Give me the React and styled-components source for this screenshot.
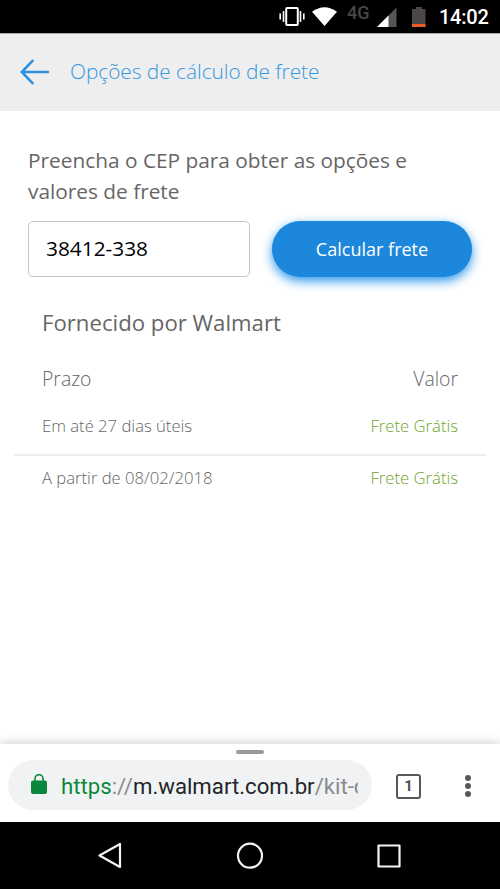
import React from "react";
import styled, { createGlobalStyle } from "styled-components";

const GlobalStyle = createGlobalStyle`
  *, *::before, *::after { box-sizing: border-box; }
  body { margin: 0; background: #fff; overflow: hidden; }
  button, input { font: inherit; }
`;

const Screen = styled.div`
  width: 500px;
  height: 889px;
  display: flex;
  flex-direction: column;
  background: #fff;
  color: #666;
  font-family: "Open Sans", sans-serif;
`;

const StatusBar = styled.div`
  height: 34px;
  flex: none;
  display: flex;
  justify-content: flex-end;
  background: #000;
  border-bottom: 1px solid #aaa;
  color: #fff;
  font-family: Roboto, sans-serif;
`;

const StatusIcon = styled.svg`
  display: block;
  flex: none;
  width: ${(p) => p.$width}px;
  height: 33px;
  margin-right: ${(p) => p.$gap}px;
`;

const Network = styled.span`
  width: 24px;
  margin-right: 6px;
  color: #474747;
  font-size: 18px;
  line-height: 25px;
  font-weight: 500;
`;

const Clock = styled.time`
  width: 61px;
  font-size: 20px;
  line-height: 35px;
  font-weight: 500;
  letter-spacing: -0.25px;
`;

const Header = styled.header`
  height: 77px;
  flex: none;
  display: flex;
  align-items: center;
  padding: 0 0 2px 20px;
  background: #eee;
`;

const BackButton = styled.button`
  display: flex;
  width: 30px;
  height: 28px;
  margin: 0 20px 0 0;
  padding: 0;
  border: 0;
  background: none;
`;

const Title = styled.h1`
  margin: 0;
  padding-bottom: 1px;
  color: #3497e3;
  font-size: 20.8px;
  line-height: 30px;
  font-weight: 300;
  white-space: nowrap;
`;

const Content = styled.main`
  flex: 1;
  padding: 34px 28px 0;
`;

const Prompt = styled.p`
  margin: 0 0 15px;
  font-size: 20.83px;
  line-height: 30.5px;
  white-space: nowrap;
`;

const Form = styled.form`
  display: flex;
  gap: 22px;
`;

const PostalInput = styled.input`
  width: 222px;
  height: 56px;
  padding: 0 17px 2px;
  border: 1px solid #c4c4c4;
  border-radius: 5px;
  outline: 0;
  background: #fff;
  color: #000;
  font-size: 20.83px;
`;

const SubmitButton = styled.button`
  width: 200px;
  height: 56px;
  padding: 0;
  border: 0;
  border-radius: 28px;
  background: #1d87dc;
  box-shadow: 0 4px 11px #2d98ed;
  color: #fff;
  font-size: 18.05px;
`;

const Provider = styled.h2`
  margin: 31px 14px 0;
  font-size: 22.2px;
  line-height: 30px;
  font-weight: 400;
  white-space: nowrap;
`;

const Rates = styled.div`
  margin: 17px -14px 0;
`;

const RateHeading = styled.div`
  height: 46px;
  display: flex;
  justify-content: space-between;
  align-items: center;
  padding: 0 28px;
  font-size: 19.4px;
  font-weight: 300;
`;

const RateRow = styled.div`
  height: ${(p) => (p.$divided ? 55 : 42)}px;
  display: flex;
  justify-content: space-between;
  align-items: center;
  padding: 0 28px ${(p) => (p.$divided ? 4 : 0)}px;
  border-bottom: ${(p) => (p.$divided ? "2px solid #eee" : "0")};
  font-size: 16.67px;
  font-weight: 300;
`;

const Amount = styled.span`
  color: ${(p) => (p.$free ? "#6fa52b" : "inherit")};
`;

const BrowserPanel = styled.footer`
  height: 78px;
  flex: none;
  background: #fff;
  box-shadow: 0 -1px 10px rgba(0, 0, 0, 0.2);
`;

const BrowserTop = styled.div`
  display: flow-root;
`;

const Handle = styled.div`
  width: 28px;
  height: 4px;
  margin: 6px auto 5px;
  border-radius: 2px;
  background: #999;
`;

const BrowserBar = styled.div`
  height: 51px;
  display: flex;
  align-items: center;
  padding-left: 8px;
`;

const Address = styled.div`
  width: 364px;
  height: 50px;
  display: flex;
  align-items: center;
  padding-left: 23px;
  border-radius: 25px;
  background: #f1f2f3;
`;

const Lock = styled.svg`
  width: 16px;
  height: 20px;
  flex: none;
  margin: -1px 14px 0 0;
`;

const Url = styled.div`
  width: 297px;
  padding-top: 2px;
  overflow: hidden;
  color: #222529;
  font-family: Roboto, sans-serif;
  font-size: 22.2px;
  line-height: 32px;
  white-space: nowrap;
`;

const UrlPart = styled.span`
  color: ${(p) => (p.$secure ? "#0b873d" : "#898b8d")};
`;

const Tabs = styled.button`
  width: 25px;
  height: 25px;
  margin: 3px 43px 0 24px;
  padding: 0;
  border: 2px solid #555759;
  border-radius: 3px;
  background: #fff;
  color: #505254;
  font: 700 15px/21px Roboto, sans-serif;
`;

const MoreIcon = styled.svg`
  width: 8px;
  height: 24px;
  margin-top: 2px;
`;

const Navigation = styled.nav`
  height: 67px;
  flex: none;
  display: flex;
  justify-content: center;
  gap: 111px;
  padding-top: 19px;
  background: #000;
`;

const NavIcon = styled.svg`
  width: 28px;
  height: 28px;
  fill: none;
  stroke: #f4f4f4;
  stroke-width: 2.2;
  stroke-linejoin: round;
`;

const rates = [
  { time: "Em até 27 dias úteis", price: "Frete Grátis", divided: true },
  { time: "A partir de 08/02/2018", price: "Frete Grátis", divided: false },
];

export default function App() {
  return (
    <>
      <GlobalStyle />
      <Screen>
        <StatusBar>
          <StatusIcon $width={26} $gap={7} viewBox="0 0 26 33">
            <rect x="7.2" y="8" width="11.6" height="17" rx="1" fill="none" stroke="#fff" strokeWidth="2" />
            <path d="M4.5 11v11M1.2 13.5v6M21.5 11v11M24.8 13.5v6" stroke="#fff" strokeWidth="1.6" />
          </StatusIcon>
          <StatusIcon $width={25} $gap={10} viewBox="0 0 25 33">
            <path d="M0 11.7Q12.5 2.7 25 11.7L12.5 26Z" fill="#fff" />
          </StatusIcon>
          <Network>4G</Network>
          <StatusIcon $width={20} $gap={15} viewBox="0 0 20 33">
            <path d="M19.5 7.5V27H0Z" fill="#555" />
            <path d="M11.5 15.5V27H0Z" fill="#fff" />
          </StatusIcon>
          <StatusIcon $width={14} $gap={13} viewBox="0 0 14 33">
            <path d="M4 7h6v2h3.5v18H0V9h4Z" fill="#4b4847" />
            <path d="M0 24h13.5v3H0Z" fill="#ef5a27" />
          </StatusIcon>
          <Clock>14:02</Clock>
        </StatusBar>

        <Header>
          <BackButton aria-label="Voltar">
            <svg width="30" height="28" viewBox="0 0 30 28" fill="none" stroke="#2c8fe0" strokeWidth="2.6" strokeLinecap="round">
              <path d="M28 14H2M12.5 2.8 1.7 14l10.8 11.2" />
            </svg>
          </BackButton>
          <Title>Opções de cálculo de frete</Title>
        </Header>

        <Content>
          <Prompt>
            Preencha o CEP para obter as opções e<br />
            valores de frete
          </Prompt>
          <Form onSubmit={(event) => event.preventDefault()}>
            <PostalInput aria-label="CEP" defaultValue="38412-338" />
            <SubmitButton>Calcular frete</SubmitButton>
          </Form>
          <Provider>Fornecido por Walmart</Provider>
          <Rates>
            <RateHeading>
              <span>Prazo</span>
              <Amount>Valor</Amount>
            </RateHeading>
            {rates.map((rate) => (
              <RateRow key={rate.time} $divided={rate.divided}>
                <span>{rate.time}</span>
                <Amount $free>{rate.price}</Amount>
              </RateRow>
            ))}
          </Rates>
        </Content>

        <BrowserPanel>
          <BrowserTop>
            <Handle />
          </BrowserTop>
          <BrowserBar>
            <Address>
              <Lock viewBox="0 0 16 20">
                <rect y="6.5" width="16" height="13.5" rx="2" fill="#0b873d" />
                <path d="M4 7V4.7a4 4 0 0 1 8 0V7" fill="none" stroke="#0b873d" strokeWidth="1.6" />
              </Lock>
              <Url>
                <UrlPart $secure>https</UrlPart>
                <UrlPart>://</UrlPart>
                m.walmart.com.br
                <UrlPart>/kit-c</UrlPart>
              </Url>
            </Address>
            <Tabs aria-label="Abas">1</Tabs>
            <MoreIcon viewBox="0 0 8 24" fill="#55585b">
              <circle cx="4" cy="4" r="3" />
              <circle cx="4" cy="12" r="3" />
              <circle cx="4" cy="20" r="3" />
            </MoreIcon>
          </BrowserBar>
        </BrowserPanel>

        <Navigation>
          <NavIcon viewBox="0 0 28 28">
            <path d="M23 3v23L2.5 14.5Z" />
          </NavIcon>
          <NavIcon viewBox="0 0 28 28">
            <circle cx="14" cy="14.7" r="12" />
          </NavIcon>
          <NavIcon viewBox="0 0 28 28">
            <rect x="3.5" y="4.5" width="21" height="21" />
          </NavIcon>
        </Navigation>
      </Screen>
    </>
  );
}
